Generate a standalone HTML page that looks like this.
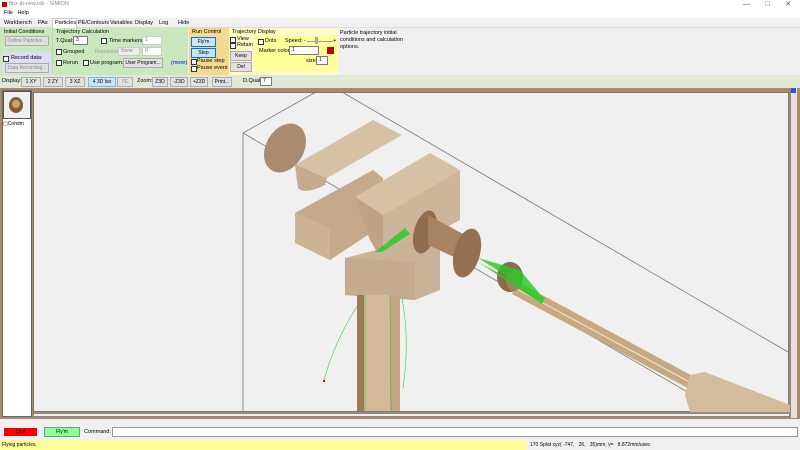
<!DOCTYPE html>
<html><head><meta charset="utf-8"><style>
*{box-sizing:border-box;margin:0;padding:0}
body{width:800px;height:450px;overflow:hidden;background:#f0f0f0;font-family:"Liberation Sans",sans-serif;font-size:5.5px;color:#000;position:relative}
.a{position:absolute;white-space:nowrap}
.btn{position:absolute;border:1px solid #adadad;background:#e1e1e1;text-align:center;line-height:8px;font-size:5px;white-space:nowrap;overflow:hidden}
.cb{position:absolute;width:6px;height:6px;border:1px solid #333;background:#fff}
.inp{position:absolute;background:#fff;border:1px solid #7a7a7a;height:9px;font-size:5px;padding-left:2px;line-height:7px;white-space:nowrap;overflow:hidden}
</style></head><body>
<div class="a" style="left:0;top:0;width:800px;height:10px;background:#fff"></div>
<div class="a" style="left:2px;top:2px;width:5px;height:5px;background:#c00"></div>
<div class="a" style="left:9px;top:1px;color:#888">fticr-jb-new.iob - SIMION</div>
<div class="a" style="left:743px;top:0;color:#555;font-size:7px">—&nbsp;&nbsp;&nbsp;&nbsp;&nbsp;&nbsp;&nbsp;&nbsp;□&nbsp;&nbsp;&nbsp;&nbsp;&nbsp;&nbsp;&nbsp;&nbsp;✕</div>
<div class="a" style="left:0;top:10px;width:800px;height:8px;background:#fff"></div>
<div class="a" style="left:4px;top:10px">File&nbsp;&nbsp;&nbsp;Help</div>
<div class="a" style="left:0;top:18px;width:800px;height:10px;background:#f0f0f0;border-bottom:1px solid #ddd"></div>
<div class="a" style="left:52px;top:18px;width:25px;height:10px;background:#fff;border:1px solid #ccc;border-bottom:none"></div>
<div class="a" style="left:4px;top:20px">Workbench</div>
<div class="a" style="left:38px;top:20px">PAs</div>
<div class="a" style="left:55px;top:20px">Particles</div>
<div class="a" style="left:78px;top:20px">PE/Contours</div>
<div class="a" style="left:110px;top:20px">Variables</div>
<div class="a" style="left:135px;top:20px">Display</div>
<div class="a" style="left:159px;top:20px">Log</div>
<div class="a" style="left:178px;top:20px">Hide</div>
<div class="a" style="left:0;top:28px;width:188px;height:47px;background:#c9e8bd"></div>
<div class="a" style="left:2px;top:52px;width:49px;height:22px;background:#dcdcf5"></div>
<div class="a" style="left:52px;top:29px;width:1px;height:45px;background:#b8d8a8"></div>
<div class="a" style="left:4px;top:29px">Initial Conditions</div>
<div class="btn" style="left:5px;top:36px;width:44px;height:10px;color:#888">Define Particles...</div>
<div class="cb" style="left:3px;top:56px"></div><div class="a" style="left:11px;top:55px">Record data:</div>
<div class="btn" style="left:5px;top:63px;width:44px;height:10px;color:#888">Data Recording...</div>
<div class="a" style="left:56px;top:29px">Trajectory Calculation</div>
<div class="a" style="left:56px;top:38px">T.Qual:</div>
<div class="inp" style="left:73px;top:36px;width:15px">3</div>
<div class="cb" style="left:101px;top:38px"></div><div class="a" style="left:109px;top:38px">Time markers:</div>
<div class="inp" style="left:142px;top:36px;width:20px;color:#888;border-color:#ccc">1</div>
<div class="cb" style="left:56px;top:49px"></div><div class="a" style="left:63px;top:49px">Grouped</div>
<div class="a" style="left:95px;top:49px;color:#999">Repulsion:</div>
<div class="inp" style="left:118px;top:47px;width:22px;color:#888;border-color:#ccc;background:#eee">None</div>
<div class="inp" style="left:142px;top:47px;width:20px;color:#888;border-color:#ccc">0</div>
<div class="cb" style="left:56px;top:60px"></div><div class="a" style="left:63px;top:60px">Rerun</div>
<div class="cb" style="left:83px;top:60px"></div><div class="a" style="left:90px;top:60px">Use program:</div>
<div class="btn" style="left:123px;top:58px;width:40px;height:10px">User Program...</div>
<div class="a" style="left:171px;top:60px;color:#00c">(more)</div>
<div class="a" style="left:189px;top:28px;width:40px;height:47px;background:#f5d98f"></div>
<div class="a" style="left:192px;top:29px">Run Control</div>
<div class="btn" style="left:191px;top:37px;width:25px;height:10px;background:#cce4f7;border-color:#0078d7">Fly'm</div>
<div class="btn" style="left:191px;top:48px;width:25px;height:10px;background:#cce4f7;border-color:#0078d7">Step</div>
<div class="cb" style="left:191px;top:59px"></div><div class="a" style="left:197px;top:58px">Pause step</div>
<div class="cb" style="left:191px;top:66px"></div><div class="a" style="left:197px;top:65px">Pause event</div>
<div class="a" style="left:229px;top:28px;width:109px;height:47px;background:#fffbc4"></div>
<div class="a" style="left:255px;top:36px;width:83px;height:35px;background:#ffff9a"></div>
<div class="a" style="left:232px;top:29px">Trajectory Display</div>
<div class="cb" style="left:230px;top:37px"></div><div class="a" style="left:237px;top:36px">View</div>
<div class="cb" style="left:230px;top:43px"></div><div class="a" style="left:237px;top:42px">Retain</div>
<div class="btn" style="left:230px;top:51px;width:22px;height:10px">Keep</div>
<div class="btn" style="left:230px;top:62px;width:22px;height:10px">Del</div>
<div class="cb" style="left:258px;top:39px"></div><div class="a" style="left:265px;top:38px">Dots</div>
<div class="a" style="left:285px;top:38px">Speed: -</div>
<div class="a" style="left:307px;top:41px;width:26px;height:1px;background:#999"></div>
<div class="a" style="left:315px;top:37px;width:3px;height:7px;background:#aaa"></div>
<div class="a" style="left:333px;top:38px">+</div>
<div class="a" style="left:259px;top:48px">Marker color:</div>
<div class="inp" style="left:289px;top:46px;width:30px">1</div>
<div class="a" style="left:327px;top:47px;width:7px;height:7px;background:#c00000"></div>
<div class="a" style="left:306px;top:58px">size:</div>
<div class="inp" style="left:316px;top:56px;width:12px">1</div>
<div class="a" style="left:340px;top:30px;font-size:5.5px;line-height:7px">Particle trajectory initial<br>conditions and calculation<br>options.</div>
<div class="a" style="left:0;top:75px;width:800px;height:13px;background:#dfe9d6"></div>
<div class="a" style="left:2px;top:78px">Display:</div>
<div class="btn" style="left:21px;top:77px;width:20px;height:10px">1 XY</div>
<div class="btn" style="left:43px;top:77px;width:20px;height:10px">2 ZY</div>
<div class="btn" style="left:65px;top:77px;width:20px;height:10px">3 XZ</div>
<div class="btn" style="left:88px;top:77px;width:28px;height:10px;background:#cce4f7;border-color:#7eb4ea">4 3D Iso</div>
<div class="btn" style="left:117px;top:77px;width:16px;height:10px;color:#999">PE</div>
<div class="a" style="left:137px;top:78px">Zoom:</div>
<div class="btn" style="left:152px;top:77px;width:16px;height:10px">Z3D</div>
<div class="btn" style="left:170px;top:77px;width:18px;height:10px">-Z3D</div>
<div class="btn" style="left:190px;top:77px;width:18px;height:10px">+Z3D</div>
<div class="btn" style="left:212px;top:77px;width:20px;height:10px">Print...</div>
<div class="a" style="left:243px;top:78px">D.Qual:</div>
<div class="inp" style="left:260px;top:77px;width:12px">7</div>
<div class="a" style="left:0;top:88px;width:800px;height:331px;background:#a88a6c"></div>
<div class="a" style="left:2px;top:90px;width:30px;height:327px;background:#fff;border:1px solid #666"></div>
<div class="a" style="left:3px;top:91px;width:28px;height:28px;background:#f0f0f0;border:1px solid #555"></div>
<div class="a" style="left:9px;top:97px;width:14px;height:16px;border-radius:50%;background:#8a5a30"></div>
<div class="a" style="left:12px;top:100px;width:8px;height:8px;border-radius:50%;background:#c9a27a"></div>
<div class="a" style="left:3px;top:121px;font-size:5px">▢Condm</div>
<div class="a" style="left:33px;top:92px;width:756px;height:320px;background:#f0f0f0;border:1px solid #777"></div>
<div class="a" style="left:790px;top:88px;width:7px;height:330px;background:#e8e0d8;border-left:1px solid #888"></div>
<div class="a" style="left:791px;top:88px;width:5px;height:5px;background:#3355cc"></div>
<div class="a" style="left:33px;top:413px;width:757px;height:4px;background:#f0f0f0;border:1px solid #888"></div>
<svg class="a" style="left:0;top:0" width="800" height="450">
<g stroke="#777" stroke-width="0.8" fill="none">
<line x1="243" y1="133" x2="243" y2="411"/><line x1="243" y1="133" x2="316" y2="92"/>
<line x1="243" y1="133" x2="720" y2="411"/><line x1="342" y1="92" x2="788" y2="352"/>
</g>
<ellipse cx="285" cy="148" rx="19" ry="26" transform="rotate(30 285 148)" fill="#a88b70"/>
<polygon points="295,165 373,120 402,135 327,178" fill="#d6c0a6"/>
<path d="M295,165 L327,178 L325,185 Q305,195 298,188 Z" fill="#c4ab8f"/>
<polygon points="295,213 373,170 383,178 383,225 330,260 295,243" fill="#c4a98c"/>
<polygon points="295,213 330,228 330,260 295,243" fill="#ccb396"/>
<polygon points="355,197 430,153 460,170 383,215" fill="#d6c0a6"/>
<polygon points="383,215 460,170 460,220 383,262" fill="#ccb59b"/>
<polygon points="355,197 383,215 383,262 370,240" fill="#bfa386"/>
<polygon points="345,258 415,240 440,250 440,290 415,300 345,295" fill="#c9b298"/>
<polygon points="345,258 415,262 415,300 345,295" fill="#c4aa8e"/>
<rect x="357" y="295" width="43" height="116" fill="#d3ba9a"/>
<rect x="357" y="295" width="7" height="116" fill="#9c7a56"/>
<rect x="390" y="295" width="10" height="116" fill="#c3a683"/>
<ellipse cx="425" cy="232" rx="11" ry="22" transform="rotate(15 425 232)" fill="#8f6c4c"/>
<polygon points="428,215 465,235 465,262 428,245" fill="#a88462"/>
<ellipse cx="467" cy="253" rx="13" ry="25" transform="rotate(15 467 253)" fill="#94704f"/>
<polygon points="518,282 700,380 695,392 512,294" fill="#c8a880"/>
<line x1="515" y1="288" x2="697" y2="386" stroke="#f0e0c8" stroke-width="1.2"/>
<ellipse cx="510" cy="277" rx="13" ry="15" fill="#8d6a4a"/>
<ellipse cx="514" cy="280" rx="8" ry="11" fill="#a0805e"/>
<polygon points="690,375 705,372 790,405 790,412 690,412 685,395" fill="#d3bc9e"/>
<g fill="#22cc22" opacity="0.8">
<polygon points="375,252 405,228 410,234 382,252"/>
<polygon points="478,262 545,298 542,304"/>
<polygon points="478,258 520,270 545,300"/>
</g>
<g stroke="#33cc33" stroke-width="0.6" fill="none">
<path d="M358,305 Q335,340 324,380"/><path d="M402,298 Q410,340 403,388"/><path d="M365,295 L365,410"/><path d="M390,295 L391,410"/>
</g>
<rect x="323" y="380" width="2" height="2" fill="#c00"/>
</svg>
<div class="a" style="left:0;top:419px;width:800px;height:21px;background:#f0f0f0"></div>
<div class="a" style="left:4px;top:428px;width:33px;height:8px;background:#ff0000;text-align:center;font-size:5px;line-height:8px">Quit</div>
<div class="a" style="left:44px;top:427px;width:36px;height:10px;background:#8fff8f;border:1px solid #5a8;text-align:center;font-size:5px;line-height:8px">Fly'm</div>
<div class="a" style="left:84px;top:429px">Command:</div>
<div class="a" style="left:112px;top:427px;width:686px;height:10px;background:#fff;border:1px solid #999"></div>
<div class="a" style="left:0;top:440px;width:527px;height:10px;background:#ffff99"></div>
<div class="a" style="left:2px;top:442px;font-size:5px">Flying particles.</div>
<div class="a" style="left:530px;top:442px;font-size:5px">170 Splat xyz( -747,&nbsp;&nbsp;&nbsp;26,&nbsp;&nbsp;&nbsp;35)mm, v=&nbsp;&nbsp;&nbsp;8.872mm/usec</div>
</body></html>
